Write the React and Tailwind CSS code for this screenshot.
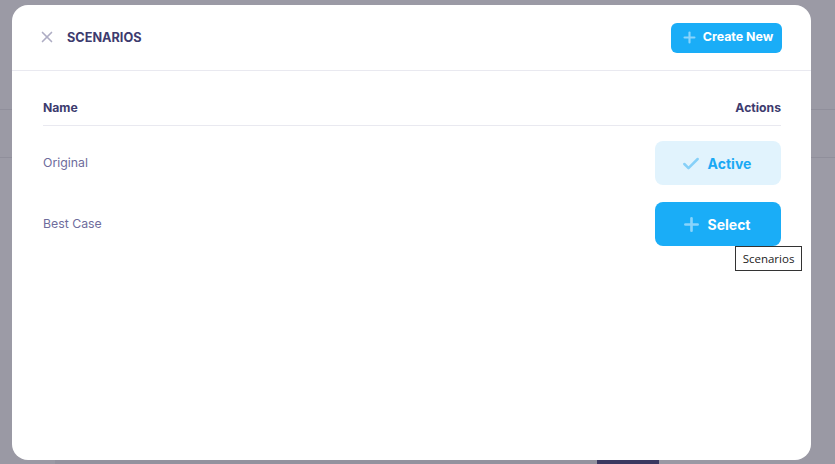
import { X, Plus, Check } from "lucide-react";

const rows = [
  { name: "Original", active: true },
  { name: "Best Case", active: false },
];

function ScenarioRow({ name, active }) {
  return (
    <div className="flex items-center justify-between h-[44px]">
      <span className="text-[12.3px] text-[#6e6c9c] pt-[1px]">{name}</span>
      {active ? (
        <button className="w-[126px] h-[44px] rounded-[8px] bg-[#e1f3fd] flex items-center justify-center gap-[7px] pt-[1px] pr-[4px] text-[14px] font-bold text-[#1aa9f4]">
          <Check size={20} strokeWidth={3} className="text-[#86d0f8]" />
          Active
        </button>
      ) : (
        <button className="w-[126px] h-[44px] rounded-[8px] bg-[#1aadf7] flex items-center justify-center gap-[5px] pt-[1px] pr-[4px] text-[14px] font-bold text-white">
          <Plus size={21} strokeWidth={3} className="text-[#8ad4fb]" />
          Select
        </button>
      )}
    </div>
  );
}

export default function App() {
  return (
    <div className="relative w-[835px] h-[464px] overflow-hidden bg-[#9b9aa5] font-['Inter',sans-serif]">
      {/* page behind the overlay */}
      <div className="flex flex-col h-full">
        <div className="h-[110px] border-b border-[#908f9b]" />
        <div className="h-[48px] border-b border-[#908f9b]" />
        <div className="h-[192px] bg-[#9c9ba6]" />
        <div className="flex-1 bg-[#9a99a4] flex items-end">
          <div className="ml-[55px] h-[4px] w-[542px] bg-[#93929e]" />
          <div className="h-[4px] w-[62px] bg-[#3a3860]" />
        </div>
      </div>

      {/* modal */}
      <div className="absolute left-[12px] top-[5px] w-[799px] h-[455px] bg-white rounded-[16px] flex flex-col">
        <div className="h-[66px] flex items-center justify-between pl-[26px] pr-[29px] border-b border-[#e9e9f0]">
          <div className="flex items-center gap-[11px]">
            <X size={18} strokeWidth={2.2} className="text-[#aeadc4]" />
            <span className="text-[12.7px] font-bold text-[#3d3b6e]">SCENARIOS</span>
          </div>
          <button className="w-[111px] h-[30px] rounded-[6px] bg-[#1aadf7] flex items-center justify-center gap-[5px] pl-[1px] text-[12.4px] font-bold text-white">
            <Plus size={17} strokeWidth={3} className="text-[#8ad4fb]" />
            Create New
          </button>
        </div>

        <div className="pl-[31px] pt-[29px] pr-[30px]">
          <div className="flex items-center justify-between h-[16px] text-[12.2px] font-bold text-[#3d3b6e]">
            <span>Name</span>
            <span>Actions</span>
          </div>
          <div className="mt-[9px] border-b border-[#e9e9f0]" />
          <div className="pt-[15px] flex flex-col gap-[17px]">
            {rows.map((r) => (
              <ScenarioRow key={r.name} {...r} />
            ))}
          </div>
        </div>
      </div>

      {/* tooltip */}
      <div className="absolute left-[735px] top-[246px] w-[67px] h-[25px] bg-white border border-[#333] flex items-center justify-center text-[11.5px] text-[#222] font-['Open_Sans',sans-serif]">
        Scenarios
      </div>
    </div>
  );
}
